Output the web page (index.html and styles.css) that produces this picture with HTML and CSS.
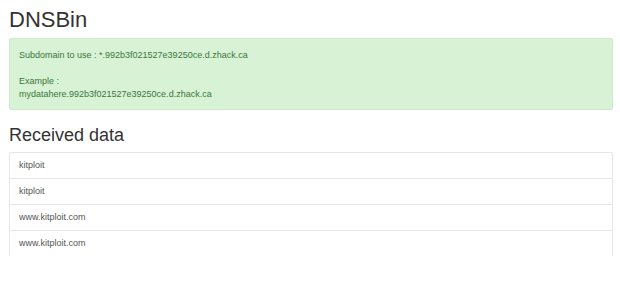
FILE: index.html
```html
<!DOCTYPE html>
<html lang="en">
  <head>
    <meta charset="UTF-8" />
    <title>DNSBin</title>
    <link rel="stylesheet" href="styles.css">
  </head>
  <body>
    <div class="container">
      <h1>DNSBin</h1>
      <div class="alert">
        <p>Subdomain to use : *.992b3f021527e39250ce.d.zhack.ca</p>
        <p>Example :<br>mydatahere.992b3f021527e39250ce.d.zhack.ca</p>
      </div>

      <h2>Received data</h2>
      <ul class="list">
        <li>kitploit</li>
        <li>kitploit</li>
        <li>www.kitploit.com</li>
        <li>www.kitploit.com</li>
      </ul>
    </div>
  </body>
</html>
```

FILE: styles.css
```css
body {
  margin: 0;
  font-family: "Liberation Sans", Arial, sans-serif;
  color: #333333;
  background: #ffffff;
}
.container {
  padding: 0 7px 0 9px;
}
h1 {
  font-size: 22px;
  font-weight: 500;
  margin: 0;
  padding-top: 8px;
  line-height: 24px;
}
h2 {
  font-size: 18px;
  font-weight: 500;
  margin: 14px 0 0;
  line-height: 22px;
}
.alert {
  margin-top: 6px;
  background: #d8f2d5;
  border: 1px solid #cfe9c9;
  border-radius: 2px;
  color: #3c763d;
  font-size: 9px;
  line-height: 13px;
  padding: 10px 9px 8px;
}
.alert p {
  margin: 0;
}
.alert p + p {
  margin-top: 13px;
}
.list {
  list-style: none;
  margin: 6px 0 0;
  padding: 0;
  font-size: 9px;
  color: #555555;
}
.list li {
  border: 1px solid #e6e6e6;
  margin-bottom: -1px;
  padding: 0 9px;
  height: 25px;
  line-height: 25px;
}
.list li:first-child {
  border-radius: 2px 2px 0 0;
}
.list li:last-child {
  border-radius: 0 0 2px 2px;
}
```
